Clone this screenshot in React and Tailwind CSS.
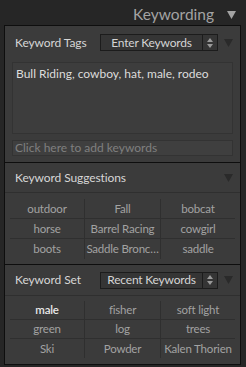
import React from 'react';

const font = { fontFamily: '"Lato", "Open Sans", sans-serif' };

const Tri = ({ className = '' }) => (
  <svg width="9" height="8" viewBox="0 0 9 8" className={className}>
    <path d="M0 0 H9 L4.5 8 Z" fill="currentColor" />
  </svg>
);

const Stepper = () => (
  <div className="flex h-full w-[15px] flex-col items-center justify-center gap-[2px] border-l border-[#1c1c1c]">
    <svg width="6" height="4" viewBox="0 0 6 4"><path d="M3 0 L6 4 H0 Z" fill="#9a9a9a" /></svg>
    <svg width="6" height="4" viewBox="0 0 6 4"><path d="M0 0 H6 L3 4 Z" fill="#9a9a9a" /></svg>
  </div>
);

const Select = ({ label }) => (
  <div className="flex h-[17px] w-[118px] items-center border border-[#1c1c1c] bg-[#353535]">
    <span className="flex-1 whitespace-nowrap text-center text-[12px] leading-none tracking-[-0.2px] text-[#d4d4d4]">{label}</span>
    <Stepper />
  </div>
);

const Grid = ({ items, first, rowH }) => (
  <div className="mx-[5px] grid grid-cols-[75px_76px_1fr]">
    {items.map((t, i) => (
      <div
        key={t}
        className={
          'flex items-center justify-center overflow-hidden whitespace-nowrap text-[11.5px] tracking-[-0.2px] ' +
          rowH + ' ' +
          (i % 3 !== 2 ? 'border-r border-[#2f2f2f] ' : '') +
          (i < 6 ? 'border-b border-[#2f2f2f] ' : '') +
          (first && i === 0 ? 'text-[#e8e8e8] font-semibold' : 'text-[#a2a2a2]')
        }
      >
        {t}
      </div>
    ))}
  </div>
);

export default function App() {
  return (
    <div className="h-[367px] w-[246px] bg-[#262626] pt-[4px]" style={font}>
      <div className="flex h-[21px] items-center justify-end gap-[13px] pr-[10px] text-[#a3a3a3]">
        <span className="text-[15.5px] leading-none">Keywording</span>
        <Tri className="h-[8px] w-[9px]" />
      </div>
      <div className="ml-[4px] w-[237px] border border-[#0e0e0e] bg-[#3b3b3b]">
        {/* Keyword Tags */}
        <div className="flex h-[32px] items-center pl-[10px] pr-[7px] pt-[1px]">
          <span className="w-[85px] text-[12px] tracking-[-0.1px] text-[#d6d6d6]">Keyword Tags</span>
          <Select label="Enter Keywords" />
          <Tri className="ml-auto text-[#2a2a2a]" />
        </div>
        <div className="mx-[7px] mt-[4px] h-[72px] border border-[#333] bg-[#3d3d3d] px-[3px] pt-[3px] text-[12px] leading-tight text-[#dcdcdc]">
          Bull Riding, cowboy, hat, male, rodeo
        </div>
        <div className="mx-[7px] mt-[6px] flex h-[16px] items-center border border-[#333] bg-[#3f3f3f] px-[2px] text-[12px] text-[#7f7f7f]">
          Click here to add keywords
        </div>
        <div className="mt-[6px] border-t border-[#0e0e0e]" />

        {/* Keyword Suggestions */}
        <div className="flex h-[29px] items-center pl-[10px] pr-[7px]">
          <span className="text-[12px] tracking-[-0.1px] text-[#d6d6d6]">Keyword Suggestions</span>
          <Tri className="ml-auto text-[#2a2a2a]" />
        </div>
        <div className="border-t border-[#2f2f2f] pt-[6px] pb-[5px]">
          <Grid rowH="h-[20px]" items={['outdoor', 'Fall', 'bobcat', 'horse', 'Barrel Racing', 'cowgirl', 'boots', 'Saddle Bronc…', 'saddle']} />
        </div>
        <div className="border-t border-[#0e0e0e]" />

        {/* Keyword Set */}
        <div className="flex h-[30px] items-center pl-[10px] pr-[7px]">
          <span className="w-[85px] text-[12px] tracking-[-0.1px] text-[#d6d6d6]">Keyword Set</span>
          <Select label="Recent Keywords" />
          <Tri className="ml-auto text-[#2a2a2a]" />
        </div>
        <div className="border-t border-[#2f2f2f] pt-[5px] pb-[6px]">
          <Grid first rowH="h-[19px]" items={['male', 'fisher', 'soft light', 'green', 'log', 'trees', 'Ski', 'Powder', 'Kalen Thorien']} />
        </div>
      </div>
    </div>
  );
}
